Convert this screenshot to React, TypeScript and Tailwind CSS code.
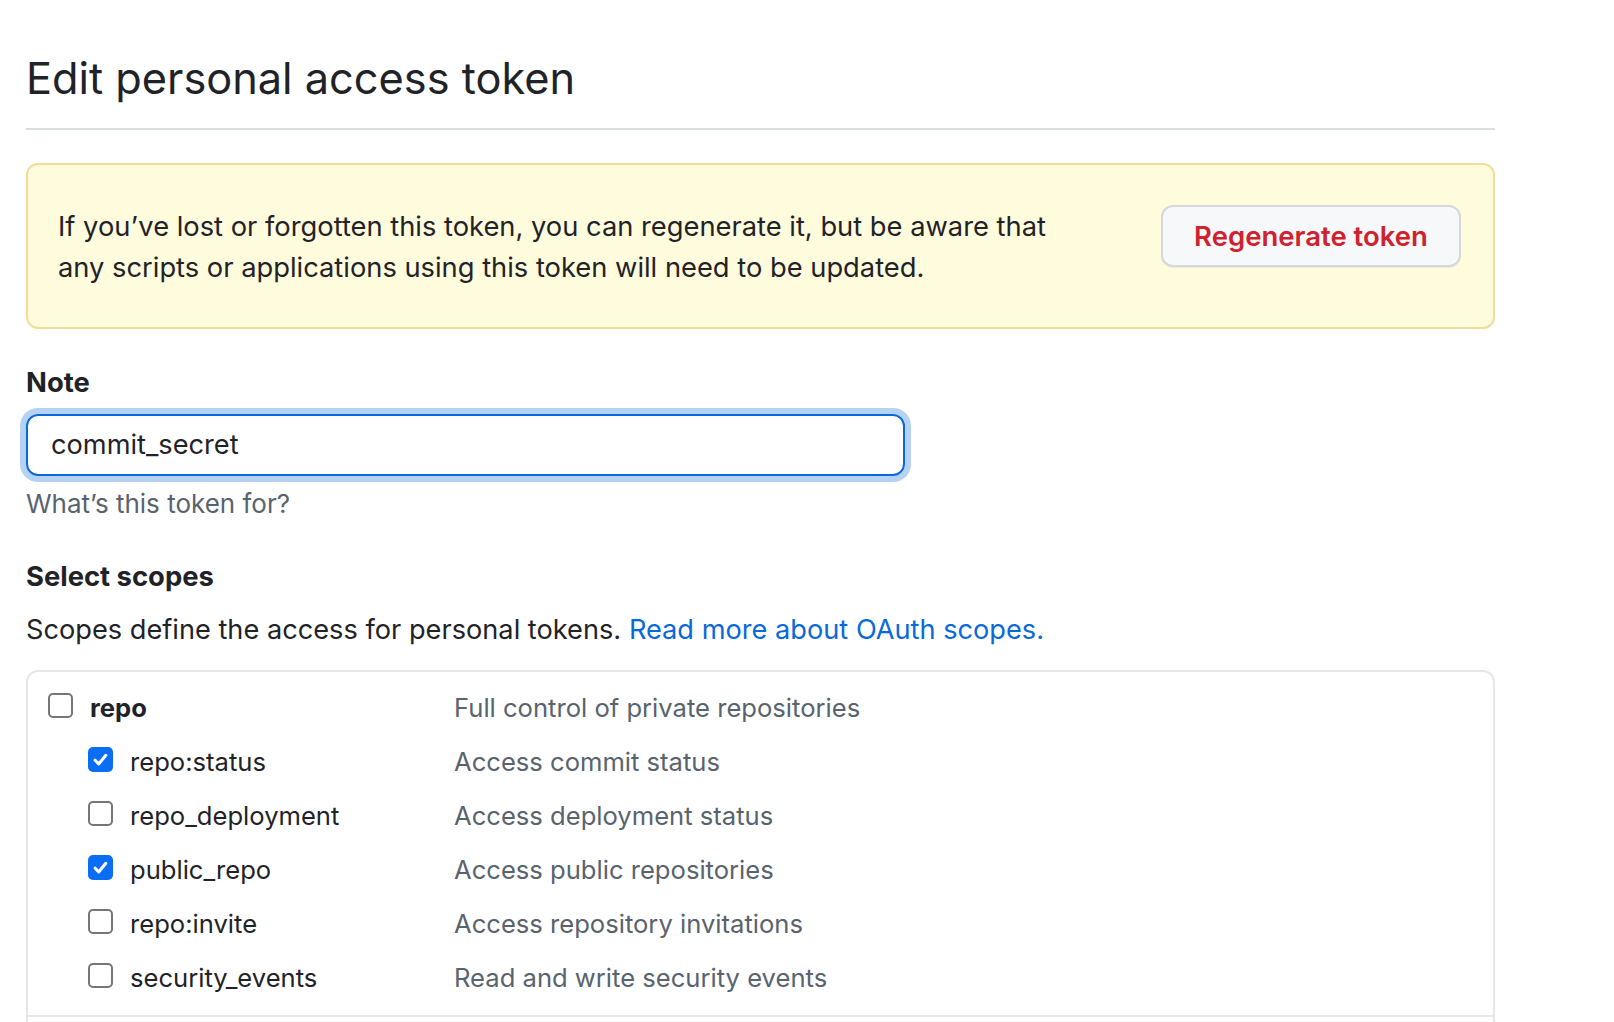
import React from "react";

type Scope = {
  name: string;
  description: string;
  checked: boolean;
  parent?: boolean;
};

const scopes: Scope[] = [
  { name: "repo", description: "Full control of private repositories", checked: false, parent: true },
  { name: "repo:status", description: "Access commit status", checked: true },
  { name: "repo_deployment", description: "Access deployment status", checked: false },
  { name: "public_repo", description: "Access public repositories", checked: true },
  { name: "repo:invite", description: "Access repository invitations", checked: false },
  { name: "security_events", description: "Read and write security events", checked: false },
];

function Checkbox({ checked }: { checked: boolean }) {
  if (checked) {
    return (
      <span className="mb-[6px] flex h-[25px] w-[25px] shrink-0 items-center justify-center rounded-[5px] bg-[#0a6ef5]">
        <svg viewBox="0 0 16 16" className="h-[19px] w-[19px]" fill="none">
          <path d="M3.5 8.6l3 3.1 6-7.2" stroke="white" strokeWidth="2.6" strokeLinecap="round" strokeLinejoin="round" />
        </svg>
      </span>
    );
  }
  return <span className="mb-[6px] block h-[25px] w-[25px] shrink-0 rounded-[5px] border-2 border-[#767676] bg-white" />;
}

function ScopeRow({ scope }: { scope: Scope }) {
  return (
    <div className="flex h-[54px] items-center text-[25.6px]">
      <div className={`flex w-[406px] items-center gap-[17px] ${scope.parent ? "" : "pl-[40px]"}`}>
        <Checkbox checked={scope.checked} />
        <span className={scope.parent ? "font-bold text-[#1f2328]" : "text-[#1f2328]"}>{scope.name}</span>
      </div>
      <span className="text-[#59636e]">{scope.description}</span>
    </div>
  );
}

export default function App() {
  return (
    <div
      className="h-[1022px] overflow-hidden bg-white text-[25px] leading-[36px] text-[#1f2328]"
      style={{ fontFamily: "Inter, 'Noto Sans', sans-serif" }}
    >
      <div className="ml-[26px] w-[1469px]">
        <div className="border-b-2 border-[#d8dee4] pt-[50px] pb-[22px]">
          <h1 className="text-[43.3px] leading-[56px] font-normal text-[#1f2328]">Edit personal access token</h1>
        </div>

        <div className="mt-[33px] flex items-start justify-between rounded-[12px] border-2 border-[#f0dd9b] bg-[#fffbdd] pt-[40px] pr-[32px] pb-[39px] pl-[30px]">
          <p className="mt-[1px] w-[1030px] text-[27.3px] leading-[41px]">
            If you’ve lost or forgotten this token, you can regenerate it, but be aware that
            <br />
            any scripts or applications using this token will need to be updated.
          </p>
          <button className="h-[62px] w-[300px] rounded-[12px] border-2 border-[#d5d8dc] bg-[#f6f8fa] text-[27.5px] font-semibold text-[#cf222e] shadow-[0_1px_0_rgba(31,35,40,0.06)]">
            Regenerate token
          </button>
        </div>

        <div className="mt-[35px] text-[27.4px] font-bold">Note</div>
        <div className="mt-[14px] flex h-[62px] w-[879px] items-center rounded-[12px] border-2 border-[#0969da] px-[23px] text-[27.2px] shadow-[0_0_0_6px_rgba(9,105,218,0.3)]">
          commit_secret
        </div>
        <div className="mt-[10px] text-[26px] text-[#59636e]">What’s this token for?</div>

        <div className="mt-[36px] text-[27.4px] font-bold">Select scopes</div>
        <div className="mt-[18px] text-[27.2px]">
          Scopes define the access for personal tokens.{" "}
          <a className="text-[#0969da]" href="#">
            Read more about OAuth scopes.
          </a>
        </div>

        <div className="mt-[22px] rounded-[12px] border-2 border-[#e4e6e9]">
          <div className="pt-[9px] pr-[20px] pb-[10px] pl-[20px]">
            {scopes.map((s) => (
              <ScopeRow key={s.name} scope={s} />
            ))}
          </div>
          <div className="h-[60px] border-t-2 border-[#e4e6e9]" />
        </div>
      </div>
    </div>
  );
}
